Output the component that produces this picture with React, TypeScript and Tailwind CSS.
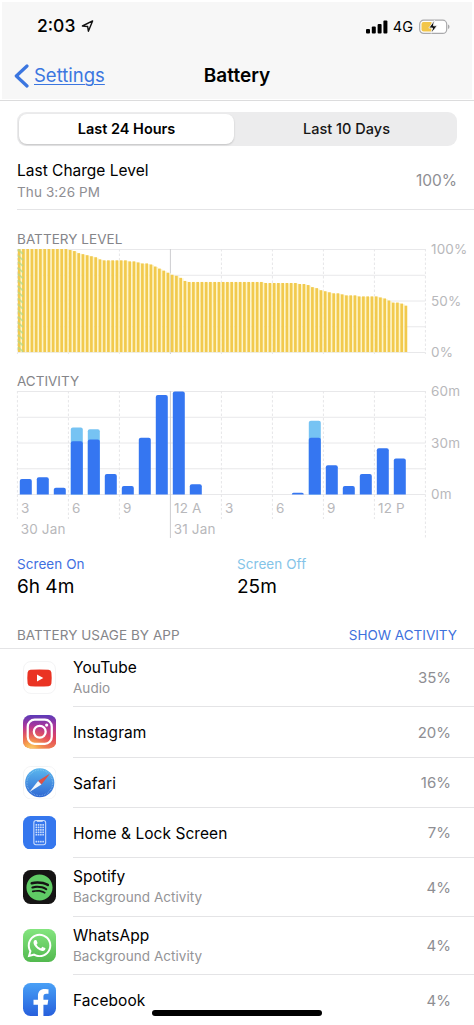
import type { ReactNode } from "react";
import { FaFacebookF, FaSpotify, FaWhatsapp } from "react-icons/fa";

const levels = [
  ...Array(12).fill(100),
  99, 98, 96, 95, 94, 93, 92, 90, 89, 89, 89, 89, 89, 89, 88, 88, 87, 86, 86, 85, 83, 81, 79, 77,
  75, 74, 72, 69,
  ...Array(18).fill(68),
  ...Array(8).fill(67),
  66, 66, 65, 63, 62, 60, 59, 58, 57, 57, 56, 55, 55, 55, 54, 54, 54, 54, 54, 53, 52, 50, 48, 48,
  47, 45,
] as number[];

// [screen on, screen off] minutes per hour
const activity: [number, number][] = [
  [9, 0], [10, 0], [4, 0], [31, 8], [32, 6], [12, 0], [5, 0], [33, 0], [58, 0], [60, 0], [6, 0],
  [0, 0], [0, 0], [0, 0], [0, 0], [0, 0], [1, 0], [33, 10], [17, 0], [5, 0], [12, 0], [27, 0],
  [21, 0],
];

const hours = ["3", "6", "9", "12 A", "3", "6", "9", "12 P"];

const LEFT = 17.4;
const STEP = 51;
const HEIGHT = 103;

function Grid({ bottom, majorBottom }: { bottom: number; majorBottom: number }) {
  return (
    <g>
      {[0, 1, 2, 3, 4].map((i) => (
        <line
          key={i}
          x1={LEFT}
          x2={425.5}
          y1={0.5 + (i * HEIGHT) / 4}
          y2={0.5 + (i * HEIGHT) / 4}
          stroke="#e8e8ea"
        />
      ))}
      {Array.from({ length: 9 }, (_, i) => (
        <line
          key={i}
          x1={LEFT + i * STEP}
          x2={LEFT + i * STEP}
          y1={0}
          y2={i === 3 || i === 8 ? majorBottom : bottom}
          stroke={i === 3 ? "#cdcdd0" : "#e6e6e8"}
          strokeDasharray={i === 3 ? undefined : "2.5 2"}
        />
      ))}
    </g>
  );
}

function AxisLabels({ labels }: { labels: string[] }) {
  return (
    <g className="fill-[#b8b8bb] text-[13.500px] tracking-[0.01em]">
      {labels.map((l, i) => (
        <text key={l} x={431} y={5 + (i * HEIGHT) / 2}>
          {l}
        </text>
      ))}
    </g>
  );
}

function LevelChart() {
  return (
    <svg width="474" height="106" className="block overflow-visible">
      <Grid bottom={105} majorBottom={105} />
      {levels.map((v, i) => {
        const h = (v / 100) * HEIGHT;
        const x = LEFT + 0.4 + i * 4.25;
        return (
          <g key={i}>
            {i < 91 && <rect x={x + 2} y={HEIGHT + 0.5 - h} width={2.3} height={h} fill="#fdf5cb" />}
            <rect x={x} y={HEIGHT - h} width={2.7} height={h} fill="#f2ca4e" />
          </g>
        );
      })}
      {Array.from({ length: 17 }, (_, i) => (
        <line
          key={i}
          x1={18}
          x2={23}
          y1={0.5 + i * 6.1}
          y2={5 + i * 6.1}
          stroke="#b5d98a"
          strokeWidth={1.8}
          opacity={0.75}
        />
      ))}
      <line x1={170.4} x2={170.4} y1={26} y2={103} stroke="#d9c9a0" opacity={0.5} />
      <AxisLabels labels={["100%", "50%", "0%"]} />
    </svg>
  );
}

function topRounded(x: number, h: number) {
  const r = Math.min(2, h);
  const y = HEIGHT + 0.5 - h;
  return `M${x} ${HEIGHT + 0.5}V${y + r}q0 ${-r} ${r} ${-r}h${12 - 2 * r}q${r} 0 ${r} ${r}V${HEIGHT + 0.5}z`;
}

function ActivityChart() {
  return (
    <svg width="474" height="149" className="block overflow-visible">
      <Grid bottom={128} majorBottom={147} />
      {activity.map(([on, off], i) => {
        const x = 19.8 + i * 17;
        return (
          <g key={i}>
            {off > 0 && <path d={topRounded(x, ((on + off) / 60) * HEIGHT)} fill="#76c3f3" />}
            {on > 0 && <path d={topRounded(x, (on / 60) * HEIGHT)} fill="#3576f1" />}
          </g>
        );
      })}
      <AxisLabels labels={["60m", "30m", "0m"]} />
      <g className="fill-[#b8b8bb] text-[13.500px] tracking-[0.01em]">
        {hours.map((h, i) => (
          <text key={i} x={21 + i * STEP} y={122}>
            {h}
          </text>
        ))}
        <text x={20.8} y={143}>30 Jan</text>
        <text x={173.8} y={143}>31 Jan</text>
      </g>
    </svg>
  );
}

function YouTubeIcon() {
  return (
    <div className="flex size-full items-center justify-center rounded-[8px] border border-[#f4f4f5] bg-white">
      <svg width="25" height="18" viewBox="0 0 25 18">
        <path d="M3.500.8Q12.500 0 21.500.8 24 1 24.400 3.500 25 9 24.400 14.500 24 17 21.500 17.200 12.500 18 3.500 17.200 1 17 .6 14.500 0 9 .6 3.500 1 1 3.500.8z" fill="#ea3323" />
        <path d="M10 5.400 16.300 9 10 12.600z" fill="#fff" />
      </svg>
    </div>
  );
}

function InstagramIcon() {
  return (
    <svg className="size-full" viewBox="0 0 34 34">
      <defs>
        <linearGradient id="igBase" x1="0" y1="0" x2="0" y2="1">
          <stop offset="0" stopColor="#5b3ab8" />
          <stop offset=".35" stopColor="#b0379a" />
          <stop offset=".7" stopColor="#e2455c" />
          <stop offset="1" stopColor="#ee8650" />
        </linearGradient>
        <radialGradient id="igGlow" cx=".25" cy="1.05" r=".75">
          <stop offset="0" stopColor="#fbd972" />
          <stop offset=".3" stopColor="#f6a34d" />
          <stop offset="1" stopColor="#e8485a" stopOpacity="0" />
        </radialGradient>
      </defs>
      <rect width="34" height="34" rx="7.500" fill="url(#igBase)" />
      <rect width="34" height="34" rx="7.500" fill="url(#igGlow)" />
      <g fill="none" stroke="#fff" strokeWidth="2.300">
        <rect x="4.800" y="4.800" width="24.400" height="24.400" rx="7" />
        <circle cx="17" cy="17" r="6" />
      </g>
      <circle cx="24" cy="10.200" r="1.600" fill="#fff" />
    </svg>
  );
}

function SafariIcon() {
  return (
    <svg className="size-full" viewBox="0 0 34 34">
      <defs>
        <linearGradient id="safariDial" x1="0" y1="0" x2="0" y2="1">
          <stop offset="0" stopColor="#5bb8ee" />
          <stop offset="1" stopColor="#2f67d3" />
        </linearGradient>
      </defs>
      <rect x=".5" y=".5" width="33" height="33" rx="7.500" fill="#fff" stroke="#f4f4f5" />
      <circle cx="17" cy="17" r="14.800" fill="url(#safariDial)" />
      <circle cx="17" cy="17" r="13" fill="none" stroke="#b5dcf6" strokeWidth="1.200" strokeDasharray=".5 1.200" opacity=".7" />
      <path d="M27.500 7.500 15.300 15.300 18.700 18.700z" fill="#dc5146" />
      <path d="M6.500 26.500 15.300 15.300 18.700 18.700z" fill="#f3f6fa" />
    </svg>
  );
}

function HomeScreenIcon() {
  return (
    <svg className="size-full" viewBox="0 0 34 34">
      <rect width="34" height="34" rx="7.500" fill="#3577ee" />
      <rect x="11" y="4.600" width="12" height="24.600" rx="2.200" fill="none" stroke="#c9dcfc" strokeWidth="1.100" />
      <path d="M14 5.200h6" stroke="#dfeafd" strokeWidth="1.300" />
      <g fill="#c9dcfc">
        {[0, 1, 2, 3, 4, 6.8].map((r) =>
          [0, 1, 2, 3].map((c) => (
            <rect key={`${r}-${c}`} x={12.7 + c * 2.3} y={8.2 + r * 2.5} width="1.700" height="1.700" rx=".4" />
          )),
        )}
      </g>
    </svg>
  );
}

function SpotifyIcon() {
  return (
    <div className="flex size-full items-center justify-center rounded-[7.500px] bg-[#151414]">
      <FaSpotify className="size-[27px] text-[#5fcb65]" />
    </div>
  );
}

function WhatsAppIcon() {
  return (
    <div className="flex size-full items-center justify-center rounded-[7.500px] bg-linear-to-b from-[#84e57f] to-[#52b94e]">
      <FaWhatsapp className="size-[27px] text-white" />
    </div>
  );
}

function FacebookIcon() {
  return (
    <div className="flex size-full items-end justify-center overflow-hidden rounded-[7.500px] bg-linear-to-b from-[#4aa0f6] to-[#285fdc]">
      <FaFacebookF className="-mb-px ml-[4px] size-[28px] text-white" />
    </div>
  );
}

type App = { name: string; detail?: string; pct: string; icon: ReactNode; height: string };

const apps: App[] = [
  { name: "YouTube", detail: "Audio", pct: "35%", icon: <YouTubeIcon />, height: "h-[58px]" },
  { name: "Instagram", pct: "20%", icon: <InstagramIcon />, height: "h-[51px]" },
  { name: "Safari", pct: "16%", icon: <SafariIcon />, height: "h-[50px]" },
  { name: "Home & Lock Screen", pct: "7%", icon: <HomeScreenIcon />, height: "h-[50px]" },
  { name: "Spotify", detail: "Background Activity", pct: "4%", icon: <SpotifyIcon />, height: "h-[59px]" },
  { name: "WhatsApp", detail: "Background Activity", pct: "4%", icon: <WhatsAppIcon />, height: "h-[58px]" },
  { name: "Facebook", pct: "4%", icon: <FacebookIcon />, height: "h-[50px]" },
];

function AppRow({ name, detail, pct, icon, height }: App) {
  return (
    <li className={`group flex pl-[22.500px] ${height}`}>
      <div className="mr-[17px] flex items-center pb-px">
        <div className="size-[33.500px]">{icon}</div>
      </div>
      <div className="flex flex-1 items-center justify-between border-b border-[#e4e4e6] pt-[2px] pr-[23px] group-last:border-0">
        <div className={detail ? "-mt-[3px]" : ""}>
          <p className="text-[15.500px] leading-5 tracking-[0.003em]">{name}</p>
          {detail && (
            <p className="mt-px text-[13.500px] leading-[18px] tracking-[0.003em] text-[#949497]">{detail}</p>
          )}
        </div>
        <span className="text-[15px] text-[#8e8e93]">{pct}</span>
      </div>
    </li>
  );
}

function StatusBar() {
  return (
    <div className="flex h-[48px] items-center pt-[1px] pr-[24px] pl-[37px]">
      <span className="text-[17.500px] font-medium">2:03</span>
      <svg width="13" height="14" viewBox="0 0 14 16" className="ml-[6px] -mt-px">
        <path d="M1.200 8 12.800 2.200 8 14 7.200 8.600z" fill="none" stroke="#111" strokeWidth="1.600" strokeLinejoin="round" />
      </svg>
      <svg width="22" height="14" viewBox="0 0 22 14" className="ml-auto">
        <rect x="0" y="9" width="4" height="4.500" rx="1" />
        <rect x="5.800" y="6.500" width="4" height="7" rx="1" />
        <rect x="11.600" y="4" width="4" height="9.500" rx="1" />
        <rect x="17.400" y="0.500" width="4" height="13" rx="1" />
      </svg>
      <span className="ml-[5px] text-[14.500px]">4G</span>
      <svg width="31" height="16" viewBox="0 0 31 16" className="ml-[6px]">
        <rect x=".7" y="1.200" width="27" height="13.200" rx="4" fill="#fff" stroke="#a9a9ab" strokeWidth="1.200" />
        <path d="M4.500 3h8v9.600h-8q-2 0-2-2V5q0-2 2-2z" fill="#f2c64a" />
        <path d="M29 5.500q1.500.6 1.500 2.300t-1.500 2.300z" fill="#a9a9ab" />
        <path d="M15.500 1.300 9.800 9h3.700l-1.200 5.300L18.200 6.800h-3.800z" fill="#111" stroke="#f7f7f7" strokeWidth=".9" />
      </svg>
    </div>
  );
}

export default function App() {
  return (
    <div className="relative h-[1025px] w-[474px] overflow-hidden bg-white font-['Inter',sans-serif] text-black">
      <header className="mx-[2px] h-[99px] bg-[#f7f7f7]">
        <div className="-mx-[2px] border-t-2 border-white">
          <StatusBar />
          <div className="grid h-[52px] grid-cols-3 items-center pr-[13px] pl-[13px]">
            <div className="flex items-center text-[#3b76e0]">
              <svg width="17" height="24" viewBox="0 0 17 24">
                <path d="M14 2 3.300 12 14 22" fill="none" stroke="currentColor" strokeWidth="3.200" strokeLinecap="round" strokeLinejoin="round" />
              </svg>
              <span className="ml-[4px] text-[18.500px] underline decoration-1 underline-offset-2">Settings</span>
            </div>
            <h1 className="pt-px text-center text-[19px] font-semibold">Battery</h1>
          </div>
        </div>
      </header>
      <div className="mt-px h-px bg-[#dcdcdd]" />

      <div className="mx-[17px] mt-[11px] flex h-[34px] rounded-[9px] bg-[#ececed] p-[2px] text-[14.500px] font-medium">
        <div className="flex w-[215px] items-center justify-center rounded-[8px] bg-white font-semibold shadow-[0_1px_2px_rgba(0,0,0,0.18)]">
          Last 24 Hours
        </div>
        <div className="flex flex-1 items-center justify-center pl-[4px] text-[#161616]">Last 10 Days</div>
      </div>

      <div className="ml-[17px] flex h-[64px] items-center justify-between border-b border-[#e4e4e6] pt-[6px] pr-[17px]">
        <div>
          <p className="text-[15.500px] leading-5">Last Charge Level</p>
          <p className="mt-[2px] text-[13.500px] leading-[18px] tracking-[0.008em] text-[#8e8e93]">Thu 3:26 PM</p>
        </div>
        <span className="text-[15.500px] text-[#8e8e93]">100%</span>
      </div>

      <h2 className="mt-[20px] ml-[17px] text-[13.500px] leading-[18px] tracking-[0.004em] text-[#858589]">BATTERY LEVEL</h2>
      <div className="mt-px">
        <LevelChart />
      </div>
      <h2 className="mt-[17px] ml-[17px] text-[13.500px] leading-[18px] text-[#858589]">ACTIVITY</h2>
      <div className="mt-px">
        <ActivityChart />
      </div>

      <div className="mt-[15px] grid grid-cols-[220px_1fr] pl-[17px]">
        <div>
          <p className="text-[13.500px] leading-[18px] tracking-[0.005em] text-[#4170df]">Screen On</p>
          <p className="mt-[2px] text-[19px] leading-6">6h 4m</p>
        </div>
        <div>
          <p className="text-[13.500px] leading-[18px] tracking-[0.005em] text-[#84c4e8]">Screen Off</p>
          <p className="mt-[2px] text-[19px] leading-6">25m</p>
        </div>
      </div>

      <div className="mt-[27px] flex h-[23px] justify-between border-b border-[#e4e4e6] px-[17px] text-[13.500px] leading-[18px]">
        <h2 className="tracking-[0.003em] text-[#858589]">BATTERY USAGE BY APP</h2>
        <span className="text-[#3d70dc]">SHOW ACTIVITY</span>
      </div>
      <ul>
        {apps.map((a) => (
          <AppRow key={a.name} {...a} />
        ))}
      </ul>

      <div className="absolute bottom-[9px] left-[152px] h-[6px] w-[170px] rounded-full bg-black" />
    </div>
  );
}
